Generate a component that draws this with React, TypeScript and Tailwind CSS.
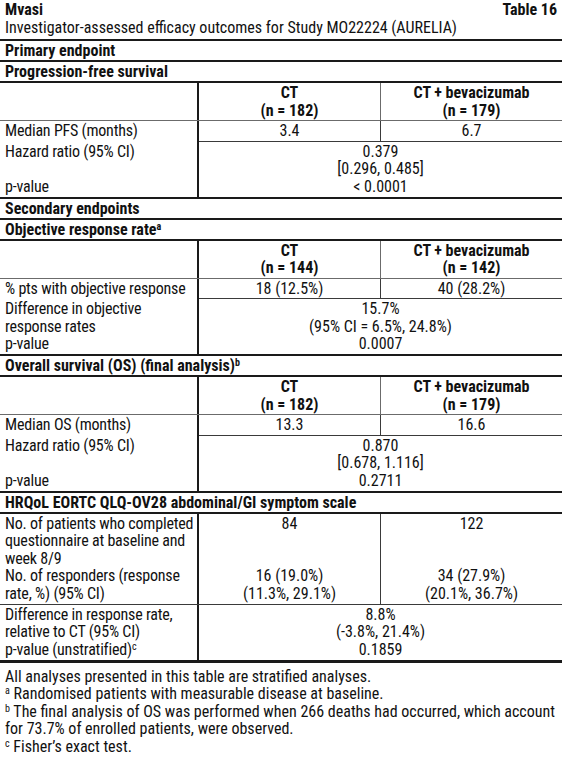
import React from "react";

const FONT = "font-['Roboto','Liberation_Sans',sans-serif] [font-stretch:75%]";
const LEFT = "whitespace-nowrap border-r-2 border-[#1a1a1a] px-[5px] tracking-[-0.2px]";

function Section({ children }: { children: React.ReactNode }) {
  return (
    <div className="h-[21px] whitespace-nowrap border-b-2 border-[#1a1a1a] px-[5px] pt-[1px] font-bold">
      {children}
    </div>
  );
}

function ColHeader({ a, b, c, d }: { a: string; b: string; c: string; d: string }) {
  return (
    <div className="grid h-[38px] grid-cols-[199px_182px_181px] border-b border-[#6b6b6b] font-bold">
      <div className="border-r-2 border-[#1a1a1a]" />
      <div className="flex flex-col items-center justify-center border-r border-[#6b6b6b]">
        <span>{a}</span>
        <span>{b}</span>
      </div>
      <div className="flex flex-col items-center justify-center">
        <span>{c}</span>
        <span>{d}</span>
      </div>
    </div>
  );
}

function PairRow({ left, mid, right }: { left: React.ReactNode; mid: React.ReactNode; right: React.ReactNode }) {
  return (
    <div className="grid grid-cols-[199px_182px_181px]">
      <div className={`${LEFT} pt-[1px] pb-[1px]`}>{left}</div>
      <div className="border-r border-b border-[#3a3a3a] pt-[1px] pb-[1px] text-center">{mid}</div>
      <div className="border-b border-[#3a3a3a] pt-[1px] pb-[1px] text-center">{right}</div>
    </div>
  );
}

function SpanRow({ left, value, bottom = "thick" }: { left: React.ReactNode; value: React.ReactNode; bottom?: "thick" | "double" }) {
  return (
    <div
      className={
        bottom === "thick"
          ? "grid grid-cols-[199px_363px] border-b-2 border-[#1a1a1a]"
          : "grid grid-cols-[199px_363px] border-b-[3px] border-[#1a1a1a]"
      }
    >
      <div className={`${LEFT} pt-[1px] pb-[1.5px]`}>{left}</div>
      <div className="pt-[1px] pb-[1.5px] text-center">{value}</div>
    </div>
  );
}

function Sup({ children }: { children: React.ReactNode }) {
  return <sup className="text-[10px]">{children}</sup>;
}

export default function App() {
  return (
    <div className={`${FONT} w-[562px] bg-white text-[16px] leading-[17.5px] text-[#111]`}>
      <div className="flex justify-between px-[5px] pt-[1px] font-bold">
        <span>Mvasi</span>
        <span>Table 16</span>
      </div>
      <div className="border-b-2 border-[#1a1a1a] px-[5px] pb-[3px] [font-stretch:81%]">
        Investigator-assessed efficacy outcomes for Study MO22224 (AURELIA)
      </div>

      <Section>Primary endpoint</Section>
      <Section>Progression-free survival</Section>
      <ColHeader a="CT" b="(n = 182)" c="CT + bevacizumab" d="(n = 179)" />
      <PairRow left="Median PFS (months)" mid="3.4" right="6.7" />
      <SpanRow
        left={
          <>
            Hazard ratio (95% CI)
            <br />
            &nbsp;
            <br />
            p-value
          </>
        }
        value={
          <>
            0.379
            <br />
            [0.296, 0.485]
            <br />
            &lt; 0.0001
          </>
        }
      />

      <Section>Secondary endpoints</Section>
      <Section>
        Objective response rate<Sup>a</Sup>
      </Section>
      <ColHeader a="CT" b="(n = 144)" c="CT + bevacizumab" d="(n = 142)" />
      <PairRow left="% pts with objective response" mid="18 (12.5%)" right="40 (28.2%)" />
      <SpanRow
        left={
          <>
            Difference in objective
            <br />
            response rates
            <br />
            p-value
          </>
        }
        value={
          <>
            15.7%
            <br />
            (95% CI = 6.5%, 24.8%)
            <br />
            0.0007
          </>
        }
      />

      <Section>
        Overall survival (OS) (final analysis)<Sup>b</Sup>
      </Section>
      <ColHeader a="CT" b="(n = 182)" c="CT + bevacizumab" d="(n = 179)" />
      <PairRow left="Median OS (months)" mid="13.3" right="16.6" />
      <SpanRow
        left={
          <>
            Hazard ratio (95% CI)
            <br />
            &nbsp;
            <br />
            p-value
          </>
        }
        value={
          <>
            0.870
            <br />
            [0.678, 1.116]
            <br />
            0.2711
          </>
        }
      />

      <Section>HRQoL EORTC QLQ-OV28 abdominal/GI symptom scale</Section>
      <div className="grid grid-cols-[199px_182px_181px] border-b border-[#3a3a3a]">
        <div className={`${LEFT} pt-[1px]`}>
          No. of patients who completed
          <br />
          questionnaire at baseline and
          <br />
          week 8/9
        </div>
        <div className="border-r border-[#3a3a3a] pt-[1px] text-center">84</div>
        <div className="pt-[1px] text-center">122</div>
        <div className={`${LEFT} pb-[1.5px]`}>
          No. of responders (response
          <br />
          rate, %) (95% CI)
        </div>
        <div className="border-r border-[#3a3a3a] pb-[1.5px] text-center">
          16 (19.0%)
          <br />
          (11.3%, 29.1%)
        </div>
        <div className="pb-[1.5px] text-center">
          34 (27.9%)
          <br />
          (20.1%, 36.7%)
        </div>
      </div>
      <SpanRow
        bottom="double"
        left={
          <>
            Difference in response rate,
            <br />
            relative to CT (95% CI)
            <br />
            p-value (unstratified)<Sup>c</Sup>
          </>
        }
        value={
          <>
            8.8%
            <br />
            (-3.8%, 21.4%)
            <br />
            0.1859
          </>
        }
      />

      <div className="px-[5px] pt-[5px] pb-[4px]">
        <p>All analyses presented in this table are stratified analyses.</p>
        <p>
          <Sup>a</Sup> Randomised patients with measurable disease at baseline.
        </p>
        <p>
          <Sup>b</Sup> The final analysis of OS was performed when 266 deaths had occurred, which account
          for 73.7% of enrolled patients, were observed.
        </p>
        <p>
          <Sup>c</Sup> Fisher’s exact test.
        </p>
      </div>
    </div>
  );
}
